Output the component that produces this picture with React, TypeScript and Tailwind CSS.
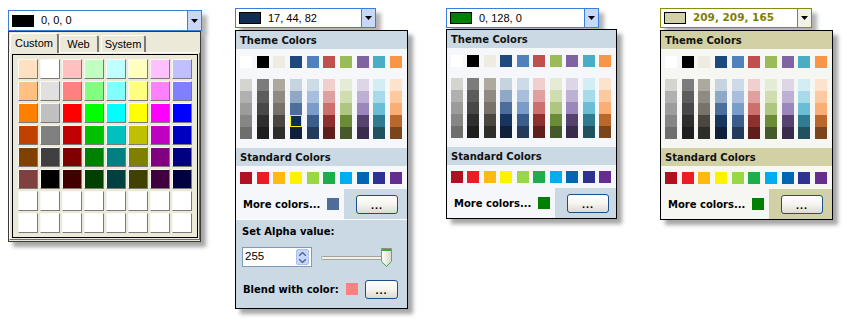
import clsx from "clsx";

const customColors = [
  "#ffe0c0", "#ffffff", "#ffc0c0", "#c0ffc0", "#c0ffff", "#ffffc0", "#ffc0ff", "#c0c0ff",
  "#ffc080", "#e0e0e0", "#ff8080", "#80ff80", "#80ffff", "#ffff80", "#ff80ff", "#8080ff",
  "#ff8000", "#c0c0c0", "#ff0000", "#00ff00", "#00ffff", "#ffff00", "#ff00ff", "#0000ff",
  "#c04000", "#808080", "#c00000", "#00c000", "#00c0c0", "#c0c000", "#c000c0", "#0000c0",
  "#804000", "#404040", "#800000", "#008000", "#008080", "#808000", "#800080", "#000080",
  "#804040", "#000000", "#400000", "#004000", "#004040", "#404000", "#400040", "#000040",
  "#ffffff", "#ffffff", "#ffffff", "#ffffff", "#ffffff", "#ffffff", "#ffffff", "#ffffff",
  "#ffffff", "#ffffff", "#ffffff", "#ffffff", "#ffffff", "#ffffff", "#ffffff", "#ffffff",
];

const themeRow = ["#ffffff", "#000000", "#eeece1", "#1f497d", "#4f81bd", "#c0504d", "#9bbb59", "#8064a2", "#4bacc6", "#f79646"];

const shades = [
  ["#d4d4d0", "#b0b0b0", "#9c9c9c", "#868686", "#6e6e6e"],
  ["#7c7c7c", "#5c5c5c", "#484848", "#2e2e2e", "#1e1e1e"],
  ["#aea99f", "#8f8b83", "#77736b", "#4a4640", "#2f2d2a"],
  ["#c6d4e0", "#8fa8c6", "#4c6e9a", "#17365d", "#10203a"],
  ["#cddbe9", "#a8bedc", "#7a9cc8", "#3b5d8c", "#233a5c"],
  ["#f0cfce", "#e0a09f", "#cd6f6d", "#8e302e", "#5e1e1c"],
  ["#e4ecd5", "#cfddb0", "#aec67f", "#6b8b37", "#45592a"],
  ["#dcd6e6", "#bdb0d2", "#9c87bd", "#55426f", "#382b4b"],
  ["#d3edf4", "#a7dbe9", "#69bed6", "#2f7b91", "#1f515f"],
  ["#fde3cc", "#fdc9a0", "#f9ae74", "#b9672a", "#7b451c"],
];

const standard = ["#b01020", "#ed1c24", "#ffb90f", "#fff200", "#99d844", "#1dad4b", "#00aeef", "#0066b3", "#2e3192", "#662d91"];

type Skin = { head: string; body: string };
const blueSkin: Skin = { head: "bg-[#cbd9e5]", body: "bg-[#f5f7fb]" };
const oliveSkin: Skin = { head: "bg-[#d1d1a5]", body: "bg-[#f6f6f2]" };

// tahoma-ish bold labels
const boldText = "font-['DejaVu_Sans',sans-serif] text-[10px] font-bold";

function Arrow() {
  return (
    <svg width="7" height="4" viewBox="0 0 7 4">
      <path d="M0 0h7L3.5 4z" fill="#000" />
    </svg>
  );
}

function Combo({ className, swatch, label, olive = false }: { className: string; swatch: string; label: string; olive?: boolean }) {
  return (
    <div
      className={clsx(
        "flex bg-white border shadow-[5px_5px_4px_rgba(0,0,0,0.3)]",
        olive ? "border-[#8a8a10]" : "border-[#3c7fd8]",
        className
      )}
    >
      <div className="flex flex-1 items-center gap-[7px] pl-[3px]">
        <span className="h-[12px] w-[22px] border border-black" style={{ backgroundColor: swatch }} />
        <span
          className={
            olive
              ? "font-['DejaVu_Sans',sans-serif] text-[10.5px] font-bold text-[#808000]"
              : "text-[11px]"
          }
        >
          {label}
        </span>
      </div>
      <div
        className={clsx(
          "flex w-[14px] items-center justify-center border-l",
          olive ? "border-[#8a8a10] bg-[#f2f2e6]" : "border-[#3c7fd8] bg-[#c8d8f8]"
        )}
      >
        <Arrow />
      </div>
    </div>
  );
}

function DotsButton({ className }: { className: string }) {
  return (
    <div
      className={clsx(
        "flex items-center justify-center rounded-[3px] border border-[#1c4f8a] bg-gradient-to-b from-white via-[#f5f4ef] to-[#dddbd1] text-[11px] leading-none tracking-[1px]",
        className
      )}
    >
      <span className="mt-[3px] font-bold">...</span>
    </div>
  );
}

function Header({ label, skin }: { label: string; skin: Skin }) {
  return (
    <div className={clsx("flex h-[18px] items-center pl-[4px] text-[#111]", boldText, skin.head)}>{label}</div>
  );
}

function Swatch({ color }: { color: string }) {
  return <span className="block h-[12px] w-[12px]" style={{ backgroundColor: color }} />;
}

function ColorPanel({
  className,
  skin,
  moreColor,
  selected = false,
  alpha = false,
}: {
  className: string;
  skin: Skin;
  moreColor: string;
  selected?: boolean;
  alpha?: boolean;
}) {
  return (
    <div className={clsx("border border-black shadow-[5px_5px_4px_rgba(0,0,0,0.35)]", skin.body, className)}>
      <Header label="Theme Colors" skin={skin} />
      <div className="pb-[9px] pl-[4px] pr-[5px] pt-[7px]">
        <div className="flex justify-between">
          {themeRow.map((c, i) => (
            <Swatch key={i} color={c} />
          ))}
        </div>
        <div className="mt-[11px] flex justify-between">
          {shades.map((col, i) => (
            <div key={i} className="flex flex-col">
              {col.map((c, j) =>
                selected && i === 3 && j === 3 ? (
                  <span key={j} className="block h-[12px] w-[12px] border border-[#f8f000] bg-[#112c52]" />
                ) : (
                  <Swatch key={j} color={c} />
                )
              )}
            </div>
          ))}
        </div>
      </div>
      <Header label="Standard Colors" skin={skin} />
      <div className="flex justify-between pb-[5px] pl-[4px] pr-[5px] pt-[6px]">
        {standard.map((c, i) => (
          <Swatch key={i} color={c} />
        ))}
      </div>
      <div className="flex h-[30px]">
        <div className="flex w-[108px] items-center pl-[7px] pr-[5px]">
          <span className={boldText}>More colors...</span>
          <span className="ml-auto block h-[12px] w-[12px]" style={{ backgroundColor: moreColor }} />
        </div>
        <div className={clsx("flex flex-1 items-center pl-[12px]", skin.head)}>
          <DotsButton className="h-[19px] w-[42px]" />
        </div>
      </div>
      {alpha && (
        <div className={clsx("border-t border-white pb-[10px] pl-[6px] pt-[4px]", skin.head)}>
          <div className={clsx("flex h-[14px] items-center", boldText)}>Set Alpha value:</div>
          <div className="mt-[8px] flex items-center">
            <div className="flex h-[20px] w-[70px] items-center border border-[#7f9db9] bg-white">
              <span className="flex-1 pl-[2px] text-[11.5px]">255</span>
              <div className="mr-[2px] flex h-[16px] w-[13px] flex-col items-center justify-around rounded-[2px] border border-[#aac0ee] bg-[#c6d6fa]">
                <svg width="7" height="4" viewBox="0 0 7 4">
                  <path d="M0 4L3.5 0.5L7 4" fill="none" stroke="#4d6185" strokeWidth="1.3" />
                </svg>
                <svg width="7" height="4" viewBox="0 0 7 4">
                  <path d="M0 0L3.5 3.5L7 0" fill="none" stroke="#4d6185" strokeWidth="1.3" />
                </svg>
              </div>
            </div>
            <svg width="72" height="22" viewBox="0 0 72 22" className="ml-[9px]">
              <defs>
                <linearGradient id="thumb" x1="0" y1="0" x2="1" y2="0">
                  <stop offset="0" stopColor="#ffffff" />
                  <stop offset="1" stopColor="#d6d6cc" />
                </linearGradient>
              </defs>
              <rect x="0.5" y="10.5" width="66" height="3" rx="1" fill="#f1f0ea" stroke="#a3a398" />
              <path d="M60.5 2.5H70.5V15.5L65.5 20.5L60.5 15.5Z" fill="url(#thumb)" stroke="#8a9184" />
              <rect x="61" y="3" width="9" height="2" fill="#2fae2f" />
              <path d="M61 16L65.5 20.3L70 16" fill="none" stroke="#3ab43a" strokeWidth="1" />
            </svg>
          </div>
          <div className="mt-[12px] flex h-[18px] items-center pl-[1px]">
            <span className={clsx("w-[103px]", boldText)}>Blend with color:</span>
            <span className="block h-[12px] w-[12px] bg-[#ff8080]" />
            <DotsButton className="ml-[7px] h-[19px] w-[33px]" />
          </div>
        </div>
      )}
    </div>
  );
}

function CustomPanel() {
  return (
    <div className="h-[211px] w-[193px] border border-[#3a3a3a] bg-[#ece9d8] px-0 shadow-[5px_5px_4px_rgba(0,0,0,0.35)]">
      <div className="flex h-[20px] items-end pl-[1px] text-[11px]">
        <div className="relative z-10 -mb-px flex h-[20px] w-[49px] items-center justify-center rounded-t-[3px] border-l border-r-2 border-t border-l-white border-r-[#7a7a7a] border-t-white bg-[#ece9d8]">
          Custom
        </div>
        <div className="flex h-[17px] w-[40px] items-center justify-center rounded-t-[3px] border-l border-r-2 border-t border-l-white border-r-[#7a7a7a] border-t-white">
          Web
        </div>
        <div className="ml-[2px] flex h-[17px] w-[45px] items-center justify-center rounded-t-[3px] border-l border-r-2 border-t border-l-white border-r-[#7a7a7a] border-t-white">
          System
        </div>
      </div>
      <div className="h-[188px] border border-b-[#6e6e6e] border-l-white border-r-[#6e6e6e] border-t-white pl-[2px] pt-[1px]">
        <div className="w-[186px] border border-black px-[5px] py-[4px]">
          <div className="grid grid-cols-8 gap-[2px]">
            {customColors.map((c, i) => (
              <span
                key={i}
                className="block h-[20px] w-[20px] border-b border-l border-r border-t border-b-[#7a7a7a] border-l-[#f8f8f4] border-r-[#7a7a7a] border-t-[#f8f8f4]"
                style={{ backgroundColor: c }}
              />
            ))}
          </div>
        </div>
      </div>
    </div>
  );
}

export default function App() {
  return (
    <div className="flex h-[321px] w-[848px] items-start bg-white font-['Liberation_Sans',Arial,sans-serif] text-black">
      <div className="ml-[8px] mt-[10px] w-[194px]">
        <Combo className="h-[21px] w-[194px]" swatch="#000000" label="0, 0, 0" />
        <CustomPanel />
      </div>

      <div className="ml-[33px] mt-[8px] w-[173px]">
        <Combo className="h-[20px] w-[141px]" swatch="#112c52" label="17, 44, 82" />
        <ColorPanel className="mt-[2px] w-[173px]" skin={blueSkin} moreColor="#4e6d9b" selected alpha />
      </div>

      <div className="ml-[38px] mt-[8px] w-[171px]">
        <Combo className="h-[20px] w-[153px]" swatch="#008000" label="0, 128, 0" />
        <ColorPanel className="mt-[1px] w-[171px]" skin={blueSkin} moreColor="#008000" />
      </div>

      <div className="ml-[43px] mt-[8px] w-[173px]">
        <Combo className="h-[20px] w-[152px]" swatch="#d1d1a5" label="209, 209, 165" olive />
        <ColorPanel className="mt-[2px] w-[173px]" skin={oliveSkin} moreColor="#008000" />
      </div>
    </div>
  );
}
